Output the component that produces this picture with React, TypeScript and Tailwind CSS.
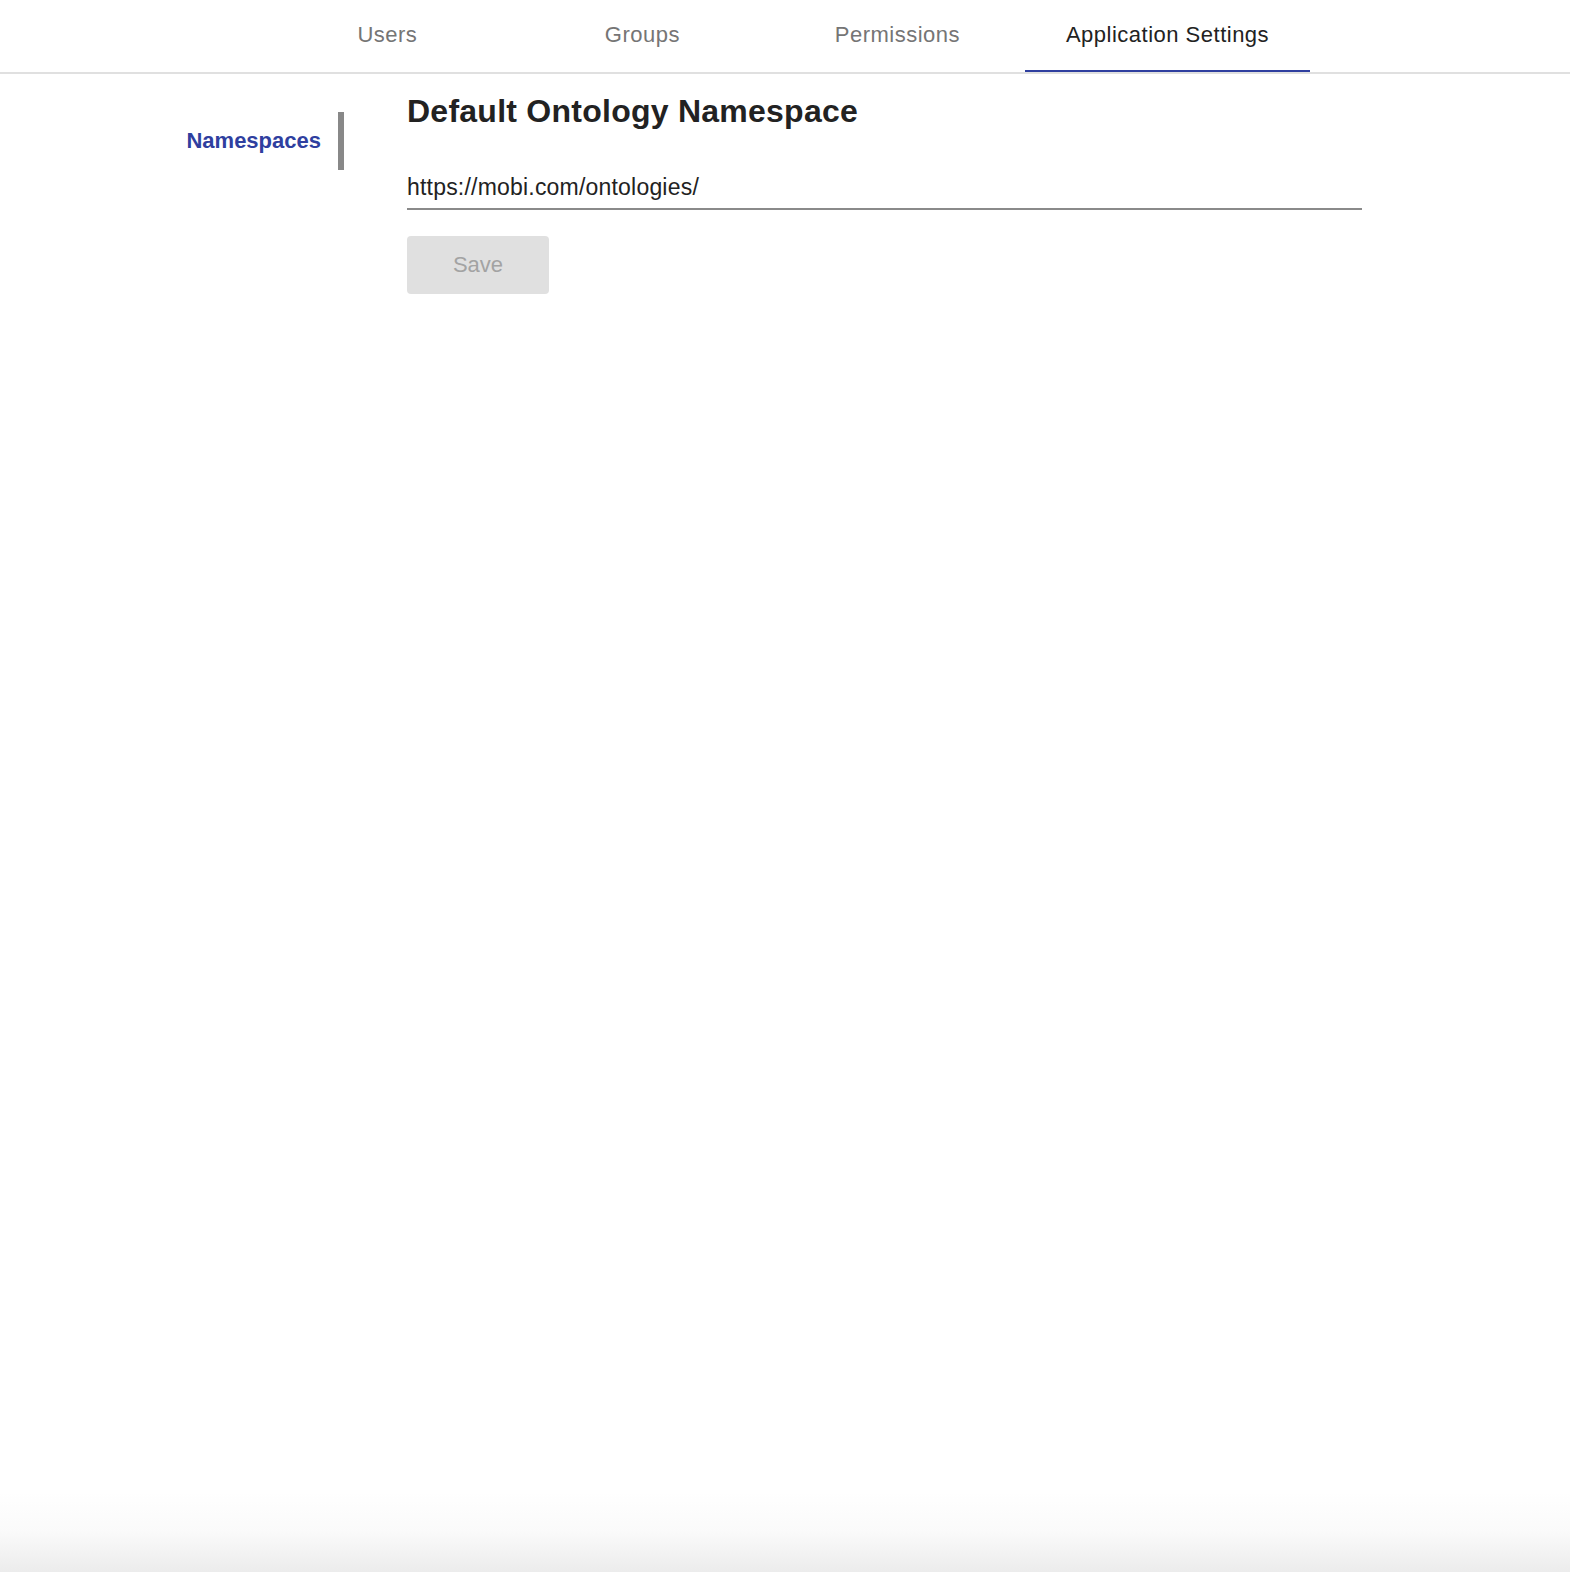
import { useState } from 'react';

const TABS = ['Users', 'Groups', 'Permissions', 'Application Settings'];

export default function App() {
  const [active, setActive] = useState('Application Settings');
  const [namespace, setNamespace] = useState('https://mobi.com/ontologies/');

  return (
    <div
      className="flex h-[1572px] flex-col bg-white text-[#222222]"
      style={{ fontFamily: '"Liberation Sans", Arial, Helvetica, sans-serif' }}
    >
      {/* Tab header */}
      <nav className="flex h-[74px] justify-center border-b-2 border-[#e0e0e0]">
        {TABS.map((tab) => (
          <button
            key={tab}
            onClick={() => setActive(tab)}
            className={`relative flex min-w-[255px] items-center justify-center px-[41px] pb-[4px] text-[22px] tracking-[0.5px] ${
              active === tab ? 'text-[#222222]' : 'text-[#757575]'
            }`}
          >
            {tab}
            {active === tab && (
              <span className="absolute right-0 bottom-0 left-0 h-[2px] bg-[#2f3f9f]" />
            )}
          </button>
        ))}
      </nav>

      {/* Settings body */}
      <main className="flex flex-1">
        <aside className="flex w-[344px] flex-col items-end pt-[38px]">
          <div className="flex h-[58px] items-center border-r-[6px] border-[#888888] pr-[17px] pb-[2px] text-[22px] font-bold text-[#2f3f9f]">
            Namespaces
          </div>
        </aside>

        <section className="ml-[63px] w-[955px] pt-[17px]">
          <h1 className="text-[32px] leading-[40px] font-bold tracking-[0.25px] text-[#222222]">
            Default Ontology Namespace
          </h1>

          <div className="mt-[41px] border-b-2 border-[#8a8a8a] pb-[6px]">
            <input
              value={namespace}
              onChange={(e) => setNamespace(e.target.value)}
              className="w-full bg-transparent text-[23px] leading-[30px] tracking-[0.2px] text-[#222222] outline-none"
            />
          </div>

          <button
            disabled
            className="mt-[26px] h-[58px] w-[142px] rounded-[4px] bg-[#e0e0e0] pb-[2px] text-[22px] text-[#a3a3a3]"
          >
            Save
          </button>
        </section>
      </main>

      <div className="h-[80px] bg-gradient-to-b from-white via-[#fafafa] to-[#ececec]" />
    </div>
  );
}
